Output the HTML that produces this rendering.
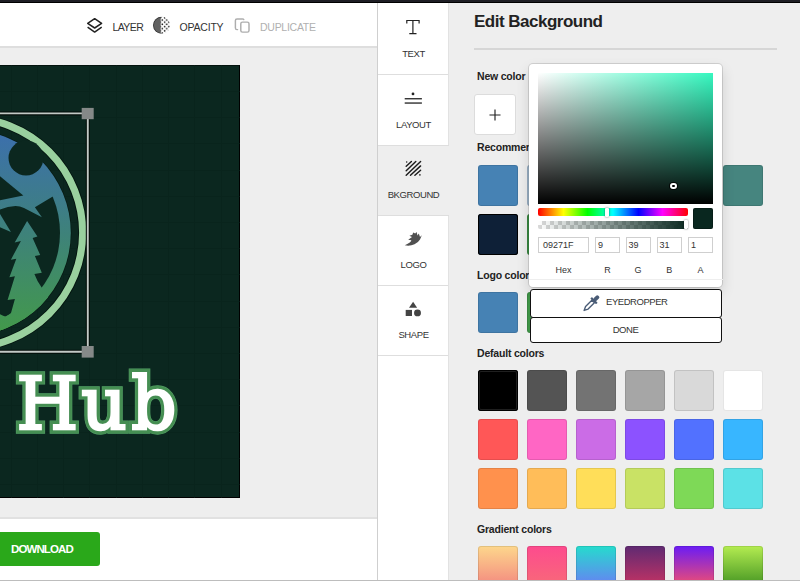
<!DOCTYPE html>
<html lang="en">
<head>
<meta charset="utf-8">
<title>Edit Background</title>
<style>
*{box-sizing:border-box;margin:0;padding:0}
html,body{width:800px;height:581px;overflow:hidden;background:#fff;font-family:"Liberation Sans",sans-serif;color:#333}
.abs{position:absolute}
#root{position:relative;width:800px;height:581px;overflow:hidden;background:#fff}
#topbar{left:0;top:0;width:800px;height:3px;background:linear-gradient(#1e1e24 0,#1e1e24 1.8px,#000 2.2px,#000 3px)}
#toolbar{left:0;top:3px;width:377px;height:45px;background:#fff;border-bottom:2px solid #dedede}
#stage{left:0;top:48px;width:377px;height:471px;background:#eeeeee}
#canvas{left:-194px;top:65px;width:434px;height:433px;background:#0b271f;border:1px solid #000;border-top-color:#04130e;border-left:0;overflow:hidden}
#footer{left:0;top:517px;width:377px;height:63px;background:#fff;border-top:2px solid #e1e1e1}
#dl{left:0;top:532px;width:100px;height:34px;background:#2aa81a;border-radius:0 3px 3px 0;color:#fff;font-weight:bold;font-size:11.5px;line-height:34px;padding-left:11px;letter-spacing:-0.9px}
#vline{left:377px;top:3px;width:1px;height:578px;background:#cfcfcf}
#side{left:378px;top:3px;width:71px;height:578px;background:#fff}
.ln{left:0;width:71px;height:1px;background:#dedede}
#side .lb{position:absolute;left:0;width:71px;text-align:center;font-size:9.5px;color:#333;letter-spacing:-0.4px;line-height:12px}
#panel{left:449px;top:3px;width:351px;height:578px;background:#eeeeee}
#bline{left:0;top:580px;width:800px;height:1px;background:#bdbdbd}
h1{position:absolute;left:474px;top:11.5px;font-size:17px;line-height:20px;font-weight:bold;color:#222;letter-spacing:-0.5px;white-space:nowrap}
#hr{left:474px;top:48px;width:303px;height:2px;background:#d6d6d6}
.sec{position:absolute;left:477px;font-size:10.5px;font-weight:bold;color:#222;line-height:12px;white-space:nowrap;letter-spacing:-0.2px}
.sw{position:absolute;width:40.1px;height:40.3px;margin:0.3px 0 0 0.1px;border-radius:3px;box-shadow:inset 0 0 0 1px rgba(0,0,0,.10)}
#plus{left:474px;top:94px;width:42px;height:41px;background:#fff;border:1px solid #dcdcdc;border-radius:3px}
#picker{left:528.5px;top:63.5px;width:193.5px;height:223.5px;background:#fff;border-radius:4px;box-shadow:0 0 0 1px rgba(0,0,0,.12),0 6px 14px rgba(0,0,0,.14)}
#sat{left:9.5px;top:9.5px;width:175px;height:130.5px;background:#36f8c0;overflow:hidden}
#hue{left:9.5px;top:144.5px;width:150px;height:8px;border-radius:2px;background:linear-gradient(to right,#f00 0%,#ff0 17%,#0f0 33%,#0ff 50%,#00f 67%,#f0f 83%,#f00 100%)}
#alpha{left:9.5px;top:157px;width:150px;height:8px;border-radius:2px;background-color:#fff;background-image:linear-gradient(45deg,#d9d9d9 25%,transparent 25%,transparent 75%,#d9d9d9 75%),linear-gradient(45deg,#d9d9d9 25%,transparent 25%,transparent 75%,#d9d9d9 75%);background-size:8px 8px;background-position:0 0,4px 4px}
#cur{left:164.5px;top:144.5px;width:20px;height:20.5px;background:#09271f;border-radius:2px;box-shadow:inset 0 0 0 1px rgba(0,0,0,.25)}
.inp{top:173.5px;height:15.5px;border:1px solid #cfcfcf;font-size:9px;line-height:15.5px;padding-left:4px;color:#333;background:#fff;white-space:nowrap;overflow:hidden}
.plb{top:200px;height:12px;font-size:9px;line-height:12px;text-align:center;color:#333}
.pbtn{left:529.5px;width:192px;background:#fff;border:1px solid #111;border-radius:3px;font-size:9.5px;color:#333;letter-spacing:-0.45px;white-space:nowrap}
.tb{position:absolute;font-size:10.5px;line-height:12px;color:#333;letter-spacing:-0.6px;white-space:nowrap}
</style>
</head>
<body>
<div id="root">
  <div id="topbar" class="abs"></div>
  <div id="toolbar" class="abs"></div>
  <svg class="abs" style="left:84px;top:14px" width="22" height="22" viewBox="0 0 22 22" fill="none" stroke="#222" stroke-width="1.5" stroke-linejoin="round" stroke-linecap="butt"><path d="M10.66 4.7 L17.6 9.4 L10.66 14 L3.7 9.4 Z"/><path d="M3.6 13.2 L10.66 18.1 L17.7 13.2"/></svg>
  <div class="tb" style="left:112.5px;top:21px">LAYER</div>
  <svg class="abs" style="left:151px;top:15px" width="22" height="22" viewBox="0 0 22 22"><defs><pattern id="dots" x="10.31" y="3.91" width="4.35" height="4.35" patternUnits="userSpaceOnUse"><circle cx="1.09" cy="1.09" r="0.85" fill="#161616"/><circle cx="3.26" cy="3.26" r="0.85" fill="#161616"/></pattern><clipPath id="oc"><circle cx="10.55" cy="10.3" r="8.5"/></clipPath></defs><g clip-path="url(#oc)"><rect x="8.4" y="0" width="13" height="22" fill="url(#dots)"/><rect x="0" y="0" width="9.7" height="22" fill="#626262"/><circle cx="10.55" cy="10.3" r="8.1" fill="none" stroke="#3a3a3a" stroke-width="0.9" stroke-dasharray="25.45 25.45" stroke-dashoffset="-12.72"/></g></svg>
  <div class="tb" style="left:179.5px;top:21px;letter-spacing:-0.2px">OPACITY</div>
  <svg class="abs" style="left:232px;top:16px" width="20" height="20" viewBox="0 0 20 20" fill="none" stroke="#adadad" stroke-width="1.45" stroke-linecap="round"><rect x="8.8" y="6.1" width="8.2" height="10" rx="1.7"/><path d="M5.6 13.6 H5 Q3.4 13.6 3.4 12 V4.5 Q3.4 2.9 5 2.9 H10.4 Q11.6 2.9 11.8 3.6"/></svg>
  <div class="tb" style="left:260px;top:21px;color:#b0b0b0;letter-spacing:-0.27px">DUPLICATE</div>
  <div id="stage" class="abs"></div>
  <div id="canvas" class="abs"></div>
  <svg class="abs" id="art" style="left:0;top:65px" width="240" height="433" viewBox="0 65 240 433">
    <g stroke="#08231b" stroke-width="1" opacity="0.6" shape-rendering="crispEdges">
      <path d="M11.5 65V498M37.5 65V498M63.5 65V498M89.5 65V498M116.5 65V498M142.5 65V498M168.5 65V498M194.5 65V498M221.5 65V498"/>
      <path d="M0 91.5H240M0 117.5H240M0 143.5H240M0 170.5H240M0 196.5H240M0 222.5H240M0 248.5H240M0 274.5H240M0 301.5H240M0 327.5H240M0 353.5H240M0 379.5H240M0 405.5H240M0 432.5H240M0 458.5H240M0 484.5H240"/>
    </g>
    <defs>
      <linearGradient id="lg" gradientUnits="userSpaceOnUse" x1="0" y1="130" x2="0" y2="336"><stop offset="0" stop-color="#3c6fae"/><stop offset="0.5" stop-color="#3e827a"/><stop offset="1" stop-color="#439a49"/></linearGradient>
      <clipPath id="disc"><circle cx="-32" cy="232.75" r="102.8"/></clipPath>
      <clipPath id="inner"><circle cx="-32" cy="232.75" r="92"/></clipPath>
    </defs>
    <g id="logo">
      <circle cx="-32" cy="232.75" r="114.7" fill="none" stroke="#04150f" stroke-width="9"/>
      <circle cx="-32" cy="232.75" r="114.7" fill="none" stroke="#99d09e" stroke-width="7.2"/>
      <circle cx="-32" cy="232.75" r="103.4" fill="#05170f"/>
      <circle cx="-32" cy="232.75" r="102.8" fill="url(#lg)"/>
      <circle cx="26" cy="158" r="17.5" fill="#0b271f"/>
      <path d="M-12 166.2 L23.3 195.6 L-12 202.6 Z" fill="#0b271f"/>
      <g clip-path="url(#inner)">
        <path d="M-12 212 L0 209.5 Q8 206.2 15.5 206 Q20 206 24 208 L41.9 217.3 L34.9 207.2 L54 195.8 L80 190 L80 340 L-12 340 Z" fill="#0b271f"/>
      </g>
      <path d="M-4 207.4 L10.9 232 L-4 225.4 Z" fill="url(#lg)"/>
      <path clip-path="url(#disc)" d="M27.1 220.9 L37.4 236.6 L32.6 237.9 L40.2 254.9 L34.9 256 L41.8 272.7 L34.4 273.9 Q37 281 41.5 287.2 L50 300 L30 335 L-5 335 L-5 311 Q2 316 5.5 316.4 Q9 315 11 313 L14.9 298.9 L7.6 299.9 L14.9 276.2 L9.4 277.3 L16.3 258.8 L10.9 259.7 L20.9 241 L14.7 242.6 Z" fill="url(#lg)"/>
    </g>
    <g id="sel">
      <path d="M-5 113.4 H87.8 V351.8 H-5" fill="none" stroke="#030c08" stroke-width="4"/>
      <path d="M-5 113.4 H87.8 V351.8 H-5" fill="none" stroke="#c2c9c5" stroke-width="1.9"/>
      <rect x="81.7" y="107.9" width="12" height="11.3" fill="#858988"/>
      <rect x="81.7" y="346" width="12" height="11.6" fill="#858988"/>
    </g>
    <g id="hub" font-family="'DejaVu Serif',serif" font-size="71.9" stroke-linejoin="miter" stroke-miterlimit="4" transform="translate(0 428.7) scale(0.985 1.012)">
      <text x="16.84 82.61 133.31" y="0" fill="none" stroke="#52a065" stroke-width="9.2">Hub</text>
      <text x="16.84 82.61 133.31" y="0" fill="none" stroke="#458e52" stroke-width="8.2">Hub</text>
      <text x="16.84 82.61 133.31" y="0" fill="#fff" stroke="#fff" stroke-width="2.6">Hub</text>
    </g>
  </svg>
  <div id="footer" class="abs"></div>
  <div id="dl" class="abs">DOWNLOAD</div>
  <div id="vline" class="abs"></div>
  <div id="side" class="abs">
    <div class="abs" style="left:0;top:142.5px;width:71px;height:70px;background:#eeeeee"></div>
    <div class="abs ln" style="top:71px"></div><div class="abs ln" style="top:142px"></div><div class="abs ln" style="top:212px"></div><div class="abs ln" style="top:282px"></div><div class="abs ln" style="top:351.6px"></div><div class="abs" style="left:70px;top:0;width:1px;height:142px;background:#e2e2e2"></div><div class="abs" style="left:70px;top:213px;width:1px;height:365px;background:#e2e2e2"></div>
    <div class="lb" style="top:44.7px">TEXT</div>
    <div class="lb" style="top:115.5px">LAYOUT</div>
    <div class="lb" style="top:185.5px">BKGROUND</div>
    <div class="lb" style="top:256px">LOGO</div>
    <div class="lb" style="top:326.3px">SHAPE</div>
    <svg class="abs" style="left:25px;top:14px" width="22" height="22" viewBox="0 0 22 22" fill="none" stroke="#222" stroke-width="1.2"><path d="M3.8 6.4 V3.5 H16.1 V6.4 M9.9 3.5 V16.4 M6.3 16.6 H13.5"/></svg>
    <svg class="abs" style="left:25px;top:84px" width="22" height="22" viewBox="0 0 22 22"><circle cx="10" cy="6.9" r="1.4" fill="#222"/><rect x="1.7" y="11.1" width="17.2" height="1.3" fill="#222"/><rect x="1.7" y="15.4" width="17.2" height="1.3" fill="#222"/></svg>
    <svg class="abs" style="left:25px;top:155px" width="22" height="22" viewBox="0 0 22 22" stroke="#1c1c1c" stroke-width="1.45" stroke-linecap="round" fill="none"><path d="M3.2 8.3 L8.4 3.5 M3.2 12.8 L12.8 3.5 M3.2 17.3 L17.6 3.5 M7.5 17.3 L17.6 7.9 M11.9 17.3 L17.6 12.2"/><circle cx="3.7" cy="4" r="0.75" fill="#1c1c1c" stroke="none"/><circle cx="16.9" cy="16.9" r="0.8" fill="#1c1c1c" stroke="none"/></svg>
    <svg class="abs" style="left:25px;top:226px" width="22" height="22" viewBox="0 0 22 22"><path fill="#505050" d="M1.8 16.3 Q7 17.3 11.5 15.3 Q15.3 13.5 17 10.5 Q18.2 8.4 18.7 6.3 L17 8 L15.8 4.5 L14.5 6.4 L13.6 2.9 L12.2 4.5 L10.2 3.4 L9.4 5.8 L6.4 6.8 L9 8 L5.2 10.8 L8.4 11.2 Q7.8 12.8 6.4 13.8 Q4.4 15.2 1.8 16.3 Z"/></svg>
    <svg class="abs" style="left:25px;top:296px" width="22" height="22" viewBox="0 0 22 22" fill="#444"><path d="M10.1 2.7 L14.1 8.7 H6 Z"/><rect x="2.7" y="10.9" width="6.3" height="6.1"/><circle cx="14.5" cy="13.9" r="3.45"/></svg>
  </div>
  <div id="panel" class="abs"></div>
  <h1>Edit Background</h1>
  <div id="hr" class="abs"></div>
  <div class="sec" style="top:70px">New color</div>
  <div id="plus" class="abs"><svg class="abs" style="left:13.5px;top:14px" width="12" height="12" viewBox="0 0 13 13" stroke="#222" stroke-width="1.25"><path d="M6.5 0.5 V12.5 M0.5 6.5 H12.5"/></svg></div>
  <div class="sec" style="top:141px">Recommended colors</div>
  <div class="sw" style="left:478px;top:165px;background:#4682b4"></div>
  <div class="sw" style="left:527px;top:165px;background:#a9c0d6"></div>
  <div class="sw" style="left:723px;top:165px;background:#46857f"></div>
  <div class="sw" style="left:478px;top:214px;background:#0e2037;box-shadow:inset 0 0 0 1px #000"></div>
  <div class="sw" style="left:527px;top:214px;background:#3f9447"></div>
  <div class="sec" style="top:269px">Logo colors</div>
  <div class="sw" style="left:478px;top:292px;background:#4682b4"></div>
  <div class="sw" style="left:527px;top:292px;background:#3f9447"></div>
  <div class="sec" style="top:347px">Default colors</div>
  <div class="sw" style="left:478px;top:370px;background:#000;box-shadow:inset 0 0 0 1px #000,inset 0 0 0 2px rgba(255,255,255,.12)"></div>
  <div class="sw" style="left:527px;top:370px;background:#545454"></div>
  <div class="sw" style="left:576px;top:370px;background:#737373"></div>
  <div class="sw" style="left:625px;top:370px;background:#a6a6a6"></div>
  <div class="sw" style="left:674px;top:370px;background:#d9d9d9"></div>
  <div class="sw" style="left:723px;top:370px;background:#ffffff"></div>
  <div class="sw" style="left:478px;top:419px;background:#ff5757"></div>
  <div class="sw" style="left:527px;top:419px;background:#ff66c4"></div>
  <div class="sw" style="left:576px;top:419px;background:#cb6ce6"></div>
  <div class="sw" style="left:625px;top:419px;background:#8c52ff"></div>
  <div class="sw" style="left:674px;top:419px;background:#5271ff"></div>
  <div class="sw" style="left:723px;top:419px;background:#38b6ff"></div>
  <div class="sw" style="left:478px;top:468px;background:#ff914d"></div>
  <div class="sw" style="left:527px;top:468px;background:#ffbd59"></div>
  <div class="sw" style="left:576px;top:468px;background:#ffde59"></div>
  <div class="sw" style="left:625px;top:468px;background:#c9e265"></div>
  <div class="sw" style="left:674px;top:468px;background:#7ed957"></div>
  <div class="sw" style="left:723px;top:468px;background:#5ce1e6"></div>
  <div class="sec" style="top:523px">Gradient colors</div>
  <div class="sw" style="left:478px;top:546px;background:linear-gradient(180deg,#fdd78c,#f3877f)"></div>
  <div class="sw" style="left:527px;top:546px;background:linear-gradient(180deg,#fd4b8e,#f86a78)"></div>
  <div class="sw" style="left:576px;top:546px;background:linear-gradient(180deg,#25dccd,#6a7df5)"></div>
  <div class="sw" style="left:625px;top:546px;background:linear-gradient(180deg,#5f2a72,#c73363)"></div>
  <div class="sw" style="left:674px;top:546px;background:linear-gradient(180deg,#6a1cf5,#f5506c)"></div>
  <div class="sw" style="left:723px;top:546px;background:linear-gradient(180deg,#b4ec51,#429321)"></div>

  <div id="picker" class="abs">
    <div class="abs" id="sat"><div class="abs" style="inset:0;background:linear-gradient(to right,#fff,rgba(255,255,255,0))"></div><div class="abs" style="inset:0;background:linear-gradient(to top,#000,rgba(0,0,0,0))"></div>
      <div class="abs" style="left:132.4px;top:109.6px;width:6.8px;height:6.8px;border-radius:50%;border:2.3px solid #fff;background:#000;box-shadow:0 0 0 1px rgba(0,0,0,.8)"></div></div>
    <div class="abs" id="hue"><div class="abs" style="left:66.5px;top:-0.5px;width:4px;height:9px;background:#fff;border-radius:1px;box-shadow:0 0 2px rgba(0,0,0,.6)"></div></div>
    <div class="abs" id="alpha"><div class="abs" style="inset:0;background:linear-gradient(to right,rgba(9,39,31,0),rgba(9,39,31,1))"></div><div class="abs" style="left:146px;top:-0.5px;width:4px;height:9px;background:#fff;border-radius:1px;box-shadow:0 0 2px rgba(0,0,0,.6)"></div></div>
    <div class="abs" id="cur"></div>
    <div class="abs inp" style="left:9.5px;width:51px">09271F</div>
    <div class="abs inp" style="left:66.5px;width:25px;padding-left:2px">9</div>
    <div class="abs inp" style="left:97px;width:25px;padding-left:2px">39</div>
    <div class="abs inp" style="left:128px;width:25.5px;padding-left:2px">31</div>
    <div class="abs inp" style="left:159.5px;width:25px;padding-left:2px">1</div>
    <div class="abs plb" style="left:9.5px;width:51px">Hex</div>
    <div class="abs plb" style="left:66.5px;width:25px">R</div>
    <div class="abs plb" style="left:97px;width:25px">G</div>
    <div class="abs plb" style="left:128px;width:25.5px">B</div>
    <div class="abs plb" style="left:159.5px;width:25px">A</div>
    <div class="abs" style="left:0;top:215px;width:194px;height:1px;background:#eeeeee"></div>
  </div>
  <div class="abs pbtn" style="top:288.5px;height:29.5px"><svg class="abs" style="left:49.5px;top:2.3px" width="22.6" height="22.6" viewBox="0 0 20 20"><g transform="rotate(45 10 10)"><rect x="8.3" y="0.8" width="3.4" height="5.4" rx="1.4" fill="#4a5c76"/><rect x="6.4" y="5.6" width="7.2" height="2.1" rx="0.6" fill="#4a5c76"/><path d="M8.4 7.7 H11.6 V15.6 L10 19 L8.4 15.6 Z" fill="none" stroke="#4a5c76" stroke-width="1.2" stroke-linejoin="round"/></g></svg><span style="position:absolute;left:75.5px;top:-1.4px;line-height:27.5px">EYEDROPPER</span></div>
  <div class="abs pbtn" style="top:317px;height:25.5px;text-align:center;line-height:23.5px">DONE</div>
  <div id="bline" class="abs"></div>
</div>
</body>
</html>
